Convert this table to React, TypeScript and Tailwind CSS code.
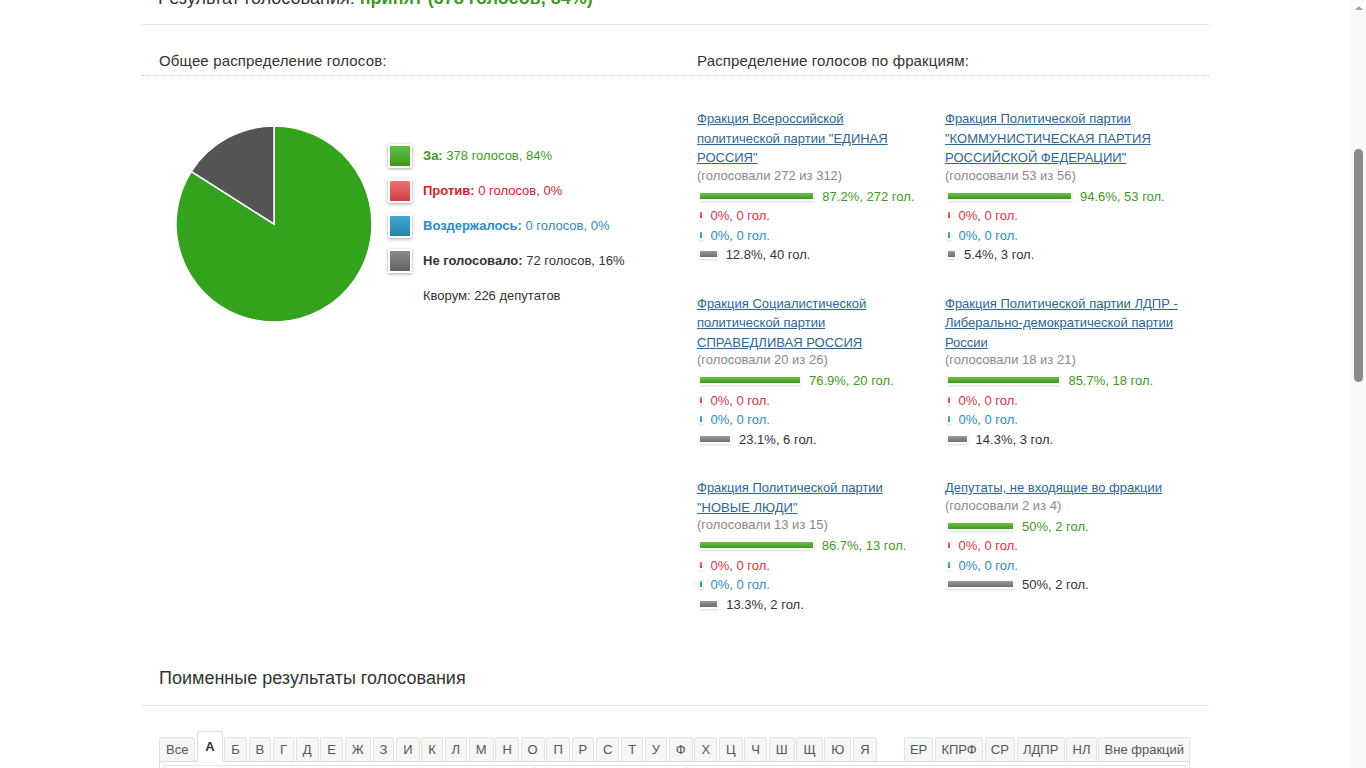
import React from "react";

type Row = { pct: number; label: string; kind: "g" | "r" | "b" | "n" };
type Faction = { title: string[]; voted: string; rows: Row[] };

const mk = (a: number, al: string, n: number, nl: string): Row[] => [
  { pct: a, label: al, kind: "g" },
  { pct: 0, label: "0%, 0 гол.", kind: "r" },
  { pct: 0, label: "0%, 0 гол.", kind: "b" },
  { pct: n, label: nl, kind: "n" },
];

const factions: Faction[] = [
  {
    title: ["Фракция Всероссийской", 'политической партии "ЕДИНАЯ', 'РОССИЯ"'],
    voted: "(голосовали 272 из 312)",
    rows: mk(87.2, "87.2%, 272 гол.", 12.8, "12.8%, 40 гол."),
  },
  {
    title: ["Фракция Политической партии", '"КОММУНИСТИЧЕСКАЯ ПАРТИЯ', 'РОССИЙСКОЙ ФЕДЕРАЦИИ"'],
    voted: "(голосовали 53 из 56)",
    rows: mk(94.6, "94.6%, 53 гол.", 5.4, "5.4%, 3 гол."),
  },
  {
    title: ["Фракция Социалистической", "политической партии", "СПРАВЕДЛИВАЯ РОССИЯ"],
    voted: "(голосовали 20 из 26)",
    rows: mk(76.9, "76.9%, 20 гол.", 23.1, "23.1%, 6 гол."),
  },
  {
    title: ["Фракция Политической партии ЛДПР -", "Либерально-демократической партии", "России"],
    voted: "(голосовали 18 из 21)",
    rows: mk(85.7, "85.7%, 18 гол.", 14.3, "14.3%, 3 гол."),
  },
  {
    title: ["Фракция Политической партии", '"НОВЫЕ ЛЮДИ"'],
    voted: "(голосовали 13 из 15)",
    rows: mk(86.7, "86.7%, 13 гол.", 13.3, "13.3%, 2 гол."),
  },
  {
    title: ["Депутаты, не входящие во фракции"],
    voted: "(голосовали 2 из 4)",
    rows: mk(50, "50%, 2 гол.", 50, "50%, 2 гол."),
  },
];

const barCls: Record<Row["kind"], string> = {
  g: "bg-linear-to-b from-[#6cc146] to-[#3a9a1c]",
  r: "bg-linear-to-b from-[#f07a7a] to-[#d03a3a]",
  b: "bg-linear-to-b from-[#52b6dc] to-[#2a86ae]",
  n: "bg-linear-to-b from-[#9a9a9a] to-[#6e6e6e]",
};
const txtCls: Record<Row["kind"], string> = {
  g: "text-[#3d9a22]",
  r: "text-[#d8333d]",
  b: "text-[#2b8cbd]",
  n: "text-[#333]",
};

function BarRow({ row }: { row: Row }) {
  const w = Math.max(1.5, (row.pct / 100) * 130);
  return (
    <div className="flex items-center h-[19.5px] pl-[2px]">
      <span className="inline-block p-[1px] pb-[2px] bg-white shadow-[0_1px_2px_rgba(0,0,0,0.14)]">
        <span className={"block h-[6px] " + barCls[row.kind]} style={{ width: w }} />
      </span>
      <span className={"ml-[8px] " + txtCls[row.kind]}>{row.label}</span>
    </div>
  );
}

function FactionBlock({ f }: { f: Faction }) {
  return (
    <div className="pb-[28px]">
      <a className="block text-[#2d6593] underline leading-[19.5px] whitespace-nowrap cursor-pointer pt-[1px]">
        {f.title.map((t, i) => (
          <span key={i} className="block">
            {t}
          </span>
        ))}
      </a>
      <div className="text-[#888] h-[16px] leading-[16px]">{f.voted}</div>
      <div className="mt-[3px]">
        {f.rows.map((r, i) => (
          <BarRow key={i} row={r} />
        ))}
      </div>
    </div>
  );
}

function Legend({
  box,
  label,
  rest,
  color,
}: {
  box: string;
  label: string;
  rest: string;
  color: string;
}) {
  return (
    <div className="flex items-center h-[35px]">
      <span className="w-[24px] h-[24px] border-2 border-white shadow-[0_1px_3px_rgba(0,0,0,0.35)] flex">
        <span className={"flex-1 " + box} />
      </span>
      <span className={"ml-[11px] text-[13px] " + color}>
        <b>{label}</b> {rest}
      </span>
    </div>
  );
}

const letters = "А Б В Г Д Е Ж З И К Л М Н О П Р С Т У Ф Х Ц Ч Ш Щ Ю Я".split(" ");
const fTabs = ["ЕР", "КПРФ", "СР", "ЛДПР", "НЛ", "Вне фракций"];

function Tab({ label, active, narrow }: { label: string; active?: boolean; narrow?: boolean }) {
  if (active)
    return (
      <div className="h-[31px] -mb-[1px] px-[7px] mr-[1.75px] flex items-center bg-white border border-[#ddd] border-b-white rounded-t-[3px] text-[#333] font-bold text-[13px] whitespace-nowrap">
        {label}
      </div>
    );
  return (
    <div
      className={
        "h-[24px] mr-[1.75px] flex items-center bg-[#f6f6f6] border border-[#e2e2e2] border-b-0 rounded-t-[3px] text-[#555] text-[13px] whitespace-nowrap " +
        (narrow ? "px-[5.2px]" : "px-[6px]")
      }
    >
      {label}
    </div>
  );
}

export default function App() {
  const r = 98;
  const a = (57.6 * Math.PI) / 180;
  const px = 100 - r * Math.sin(a);
  const py = 100 - r * Math.cos(a);
  return (
    <div className="h-screen overflow-hidden flex bg-white font-['Liberation_Sans',Arial,sans-serif] text-[#333]">
      <div className="flex-1 min-w-0">
        <div className="w-[1067px] mx-auto -mt-[12px]">
          <div className="border-b border-[#e5e5e5] pb-[16px] pl-[16px] text-[18px] leading-[20px] text-[#333]">
            Результат голосования: <b className="text-[#3d9a22]">принят (378 голосов, 84%)</b>
          </div>

          <div className="mt-[26px] flex">
            <div className="w-[538px]">
              <div className="border-b border-dotted border-[#ccc] pl-[17px] pb-[4px] text-[15px] leading-[20px] tracking-[0.15px]">
                Общее распределение голосов:
              </div>
              <div className="flex">
                <svg width="200" height="200" viewBox="0 0 200 200" className="ml-[32px] mt-[48px] shrink-0">
                  <path
                    d={`M100,100 L100,2 A98,98 0 1,1 ${px},${py} Z`}
                    fill="#33a31e"
                    stroke="#fff"
                    strokeWidth="1.5"
                  />
                  <path
                    d={`M100,100 L${px},${py} A98,98 0 0,1 100,2 Z`}
                    fill="#555555"
                    stroke="#fff"
                    strokeWidth="1.5"
                  />
                </svg>
                <div className="ml-[14px] mt-[62px]">
                  <Legend
                    box="bg-linear-to-b from-[#62bf3c] to-[#3a9a1c]"
                    label="За:"
                    rest="378 голосов, 84%"
                    color="text-[#3d9a22]"
                  />
                  <Legend
                    box="bg-linear-to-b from-[#ee7272] to-[#c94040]"
                    label="Против:"
                    rest="0 голосов, 0%"
                    color="text-[#d8202c]"
                  />
                  <Legend
                    box="bg-linear-to-b from-[#3fa8d0] to-[#2680a6]"
                    label="Воздержалось:"
                    rest="0 голосов, 0%"
                    color="text-[#2b8cbd]"
                  />
                  <Legend
                    box="bg-linear-to-b from-[#8a8a8a] to-[#636363]"
                    label="Не голосовало:"
                    rest="72 голосов, 16%"
                    color="text-[#333]"
                  />
                  <div className="h-[35px] flex items-center pl-[35px] text-[13px]">Кворум: 226 депутатов</div>
                </div>
              </div>
            </div>
            <div className="flex-1">
              <div className="border-b border-dotted border-[#ccc] pl-[17px] pb-[4px] text-[15px] leading-[20px] tracking-[0.15px]">
                Распределение голосов по фракциям:
              </div>
              <div className="mt-[32px] pl-[17px] grid grid-cols-[248px_248px] text-[13px]">
                {factions.map((f, i) => (
                  <FactionBlock key={i} f={f} />
                ))}
              </div>
            </div>
          </div>

          <div className="mt-[26px] border-b border-[#e5e5e5] pb-[17px] pl-[17px] text-[18px] leading-[20px]">
            Поименные результаты голосования
          </div>

          <div className="mx-[17px] mt-[25px]">
            <div className="flex items-end justify-between">
              <div className="flex items-end">
                <Tab label="Все" />
                {letters.map((l) => (
                  <Tab key={l} label={l} active={l === "А"} />
                ))}
              </div>
              <div className="flex items-end">
                {fTabs.map((l) => (
                  <Tab key={l} label={l} narrow />
                ))}
              </div>
            </div>
            <div className="border border-[#ddd] h-[40px] mr-[2px] p-[3px]">
              <div className="flex border border-[#e5e5e5] h-full">
                <div className="w-[370px] border-r border-[#e5e5e5]" />
                <div className="w-[152px] border-r border-[#e5e5e5]" />
                <div className="flex-1" />
              </div>
            </div>
          </div>
        </div>
      </div>
      <div className="w-[15px] shrink-0 bg-[#fafafa] flex flex-col items-center">
        <div className="h-[16px] flex items-center justify-center">
          <div className="w-0 h-0 border-l-[4px] border-r-[4px] border-b-[4px] border-l-transparent border-r-transparent border-b-[#a3a3a3]" />
        </div>
        <div className="mt-[133px] w-[9px] h-[233px] rounded-full bg-[#8a8a8a]" />
      </div>
    </div>
  );
}
